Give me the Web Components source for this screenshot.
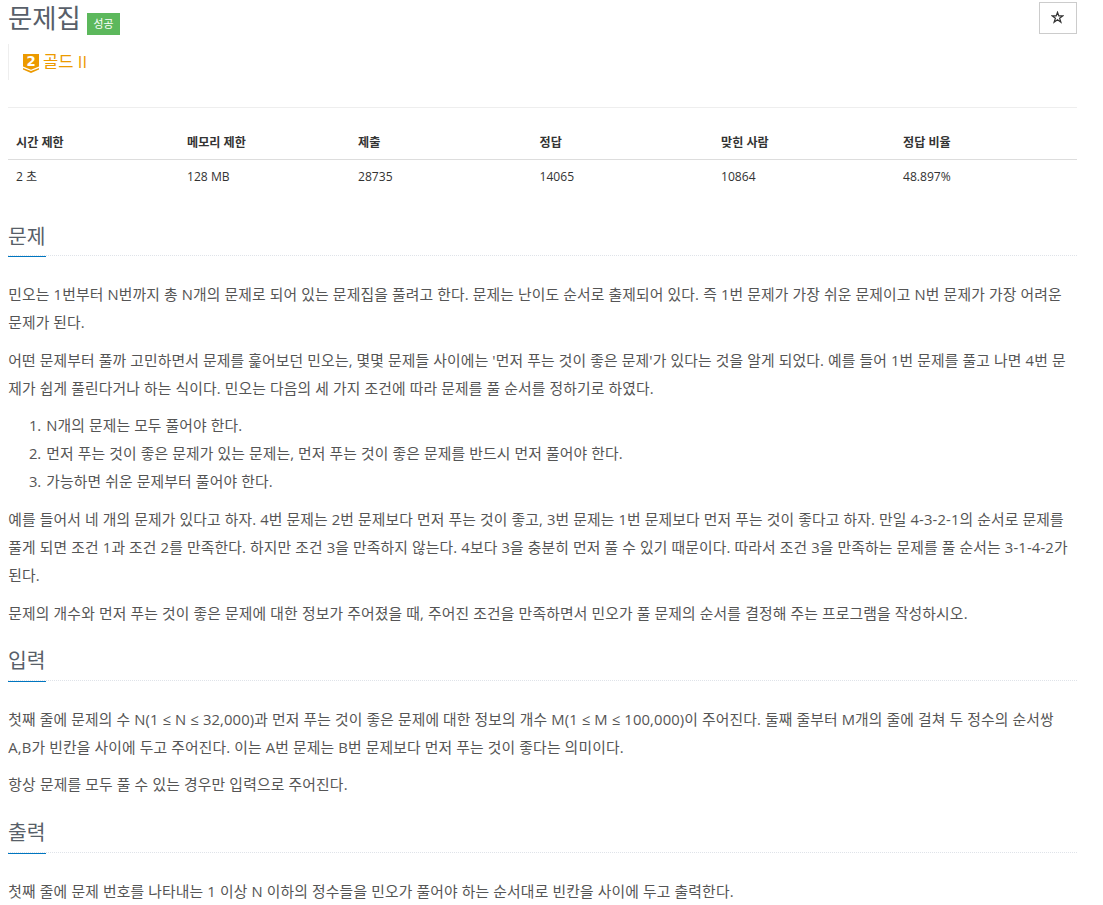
<!DOCTYPE html>
<html lang="ko">
<head>
<meta charset="utf-8">
<title>문제집</title>
<style>
body{margin:0;background:#fff;color:#333;font-family:"Open Sans","Noto Sans CJK KR",sans-serif;font-size:14.8px;overflow:hidden}
</style>
</head>
<body>
<problem-page></problem-page>
<script>
const define=(name,html,init)=>customElements.define(name,class extends HTMLElement{
  connectedCallback(){
    if(this.shadowRoot)return;
    this.attachShadow({mode:'open'}).innerHTML=html;
    if(init)init.call(this,this.shadowRoot);
  }
});

/* One line of running text; w is the width in pixels that its letters are spaced to. */
define('text-line','<style>:host{display:block;white-space:nowrap}span{display:inline-block;margin-left:.3px}</style><span><slot></slot></span>',function(root){
  const w=parseFloat(this.getAttribute('w'))-.6;
  if(!w)return;
  const s=root.querySelector('span');
  s.style.letterSpacing='0px';
  const n=this.textContent.length;
  s.style.letterSpacing=((w-s.getBoundingClientRect().width)/n)+'px';
});

define('text-block','<style>:host{display:block;line-height:28.1px;margin-bottom:9.4px;color:#555}</style><slot></slot>');

define('step-item','<style>:host{display:flex;line-height:28.1px;color:#555;padding-left:21px}b{font-weight:400;width:17px;letter-spacing:-.2px}</style><b></b><slot></slot>',function(root){
  root.querySelector('b').textContent=this.getAttribute('n')+'.';
});

define('section-heading',`<style>
:host{display:flex;height:var(--h,50px);align-items:flex-end;border-bottom:1px dotted #dfe3e9;margin-bottom:23.6px}
h2{margin:0 0 -2px;font-size:20.4px;font-weight:400;line-height:var(--l,34.5px);height:38px;color:#585f69;border-bottom:1px solid #0076c0;width:38px;white-space:nowrap}
</style><h2><slot></slot></h2>`);

define('result-label','<style>:host{display:block;box-sizing:border-box;width:33px;height:22px;background:#5cb85c;color:#fff;font-size:10.8px;line-height:22px;text-align:center}</style><slot></slot>');

define('tier-badge',`<style>
:host{display:flex;align-items:center;box-sizing:border-box;height:36px;border-left:1px solid #eee;padding-left:14px;font-size:16.6px;color:#ec9a00}
svg{display:block;overflow:visible;margin:3px 4px 0 0}span{white-space:pre;margin-top:-2px}
</style><svg width="16" height="20" viewBox="0 0 16 20"><path d="M0 0H16V12.6L8 15.8L0 12.6Z" fill="#ec9a00"/><path d="M0 13.9L8 17.1L16 13.9V15.6L8 19L0 15.6Z" fill="#ec9a00"/><text x="8" y="11.8" text-anchor="middle" font-family="DejaVu Sans" font-size="13.2" font-weight="700" fill="#fff">2</text></svg><span><slot></slot></span>`);

define('star-button','<style>:host{display:flex;box-sizing:border-box;width:38px;height:32px;border:1px solid #ccc;align-items:center;justify-content:center}svg{margin:0 2px 2px 0}</style><svg width="13" height="13" viewBox="0 0 13 13"><path d="M6.5 1.3L7.8 4.9H11.7L8.6 7.2L9.9 11.3L6.5 8.8L3.1 11.3L4.4 7.2L1.3 4.9H5.2Z" fill="none" stroke="#333" stroke-width="1.2"/></svg>');

define('info-table',`<style>
:host{display:block;font-size:12.1px;color:#333}
div{display:grid;grid-template-columns:171px 171px 181.5px 181.5px 182px 1fr}
div>*{padding-left:8px;white-space:nowrap}
.h{font-weight:700;height:34px;line-height:36px;border-bottom:1px solid #ddd}
.r{height:33px;line-height:33px}
</style><div class="h"><span>시간 제한</span><span>메모리 제한</span><span>제출</span><span>정답</span><span>맞힌 사람</span><span>정답 비율</span></div>
<div class="r"><span>2 초</span><span>128 MB</span><span>28735</span><span>14065</span><span>10864</span><span>48.897%</span></div>`);

define('problem-page',`<style>
:host{display:block;width:1069px;margin-left:8px}
header{display:flex;height:44px;align-items:flex-start}
h1{margin:0 7px 0 0;font-size:26.4px;font-weight:400;line-height:36px;color:#585f69;width:72px;white-space:nowrap}
result-label{margin-top:13px}
star-button{margin:2px 0 0 auto}
hr{border:0;border-top:1px solid #eee;margin:27px 0 17px}
</style>
<header><h1>문제집</h1><result-label>성공</result-label><star-button></star-button></header>
<tier-badge>골드 II</tier-badge>
<hr>
<info-table></info-table>
<section-heading style="--h:62px;--l:36px;margin-bottom:24.1px">문제</section-heading>
<text-block>
<text-line w="1054">민오는 1번부터 N번까지 총 N개의 문제로 되어 있는 문제집을 풀려고 한다. 문제는 난이도 순서로 출제되어 있다. 즉 1번 문제가 가장 쉬운 문제이고 N번 문제가 가장 어려운</text-line>
<text-line w="77">문제가 된다.</text-line>
</text-block>
<text-block>
<text-line w="1058">어떤 문제부터 풀까 고민하면서 문제를 훑어보던 민오는, 몇몇 문제들 사이에는 '먼저 푸는 것이 좋은 문제'가 있다는 것을 알게 되었다. 예를 들어 1번 문제를 풀고 나면 4번 문</text-line>
<text-line w="646">제가 쉽게 풀린다거나 하는 식이다. 민오는 다음의 세 가지 조건에 따라 문제를 풀 순서를 정하기로 하였다.</text-line>
</text-block>
<text-block>
<step-item n="1"><text-line w="196.5">N개의 문제는 모두 풀어야 한다.</text-line></step-item>
<step-item n="2"><text-line w="577">먼저 푸는 것이 좋은 문제가 있는 문제는, 먼저 푸는 것이 좋은 문제를 반드시 먼저 풀어야 한다.</text-line></step-item>
<step-item n="3"><text-line w="227">가능하면 쉬운 문제부터 풀어야 한다.</text-line></step-item>
</text-block>
<text-block>
<text-line w="1056">예를 들어서 네 개의 문제가 있다고 하자. 4번 문제는 2번 문제보다 먼저 푸는 것이 좋고, 3번 문제는 1번 문제보다 먼저 푸는 것이 좋다고 하자. 만일 4-3-2-1의 순서로 문제를</text-line>
<text-line w="1060">풀게 되면 조건 1과 조건 2를 만족한다. 하지만 조건 3을 만족하지 않는다. 4보다 3을 충분히 먼저 풀 수 있기 때문이다. 따라서 조건 3을 만족하는 문제를 풀 순서는 3-1-4-2가</text-line>
<text-line w="32">된다.</text-line>
</text-block>
<text-block>
<text-line w="960">문제의 개수와 먼저 푸는 것이 좋은 문제에 대한 정보가 주어졌을 때, 주어진 조건을 만족하면서 민오가 풀 문제의 순서를 결정해 주는 프로그램을 작성하시오.</text-line>
</text-block>
<section-heading style="--h:44.2px">입력</section-heading>
<text-block>
<text-line w="1046">첫째 줄에 문제의 수 N(1 ≤ N ≤ 32,000)과 먼저 푸는 것이 좋은 문제에 대한 정보의 개수 M(1 ≤ M ≤ 100,000)이 주어진다. 둘째 줄부터 M개의 줄에 걸쳐 두 정수의 순서쌍</text-line>
<text-line w="616">A,B가 빈칸을 사이에 두고 주어진다. 이는 A번 문제는 B번 문제보다 먼저 푸는 것이 좋다는 의미이다.</text-line>
</text-block>
<text-block>
<text-line w="340">항상 문제를 모두 풀 수 있는 경우만 입력으로 주어진다.</text-line>
</text-block>
<section-heading style="--h:44.4px">출력</section-heading>
<text-block>
<text-line w="726">첫째 줄에 문제 번호를 나타내는 1 이상 N 이하의 정수들을 민오가 풀어야 하는 순서대로 빈칸을 사이에 두고 출력한다.</text-line>
</text-block>`);
</script>
</body>
</html>
